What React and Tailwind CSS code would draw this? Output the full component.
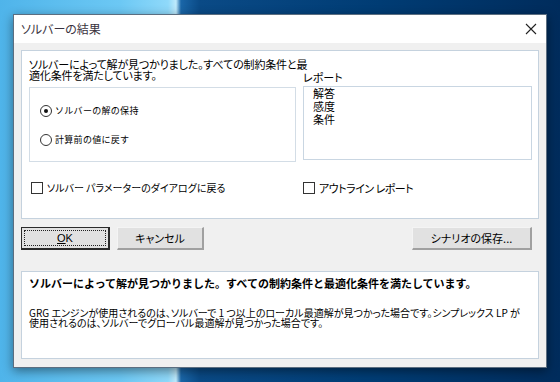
import React from "react";

const jp = "font-['Noto_Sans_CJK_JP','Noto_Sans',sans-serif]";

function Radio({ checked, label }) {
  return (
    <div className="flex items-center h-[14px]">
      <span className="w-[12px] h-[12px] rounded-full border border-[#333] bg-white flex items-center justify-center">
        {checked && <span className="w-[4px] h-[4px] rounded-full bg-[#111]" />}
      </span>
      <span className="ml-[3px] text-[9px] leading-[12px] tracking-[0.3px] text-black">{label}</span>
    </div>
  );
}

function Check({ label, textClass }) {
  return (
    <div className="flex items-center h-[14px]">
      <span className="w-[12px] h-[12px] border border-[#333] bg-white" />
      <span className={`ml-[4px] leading-[12px] text-black [font-feature-settings:'palt'] ${textClass}`}>{label}</span>
    </div>
  );
}

export default function App() {
  return (
    <div className={`relative w-[560px] h-[382px] overflow-hidden ${jp} bg-[linear-gradient(90deg,#4fb4ea_0px,#6cc8f4_120px,#8fd9fa_168px,#bfeafc_176px,#1a66a8_181px,#0a4a86_200px,#003c74_380px,#002c5c_560px)]`}>
      <div className="absolute left-[13px] top-[14px] w-[534px] h-[354px] border border-[#5c6e80] bg-[#f0f0f0] flex flex-col shadow-[0_3px_10px_rgba(0,0,0,0.45)]">
        {/* title bar */}
        <div className="h-[28px] bg-white flex items-center justify-between pl-[7px] pr-[8px] shrink-0">
          <span className="text-[12px] leading-[14px] text-[#3a3340] [font-feature-settings:'palt']">ソルバーの結果</span>
          <svg width="12" height="12" viewBox="0 0 12 12" className="mr-[1px]">
            <path d="M1 1 L11 11 M11 1 L1 11" stroke="#222" strokeWidth="1.1" />
          </svg>
        </div>
        {/* body */}
        <div className="flex-1 flex flex-col px-[7px] pt-[7px] pb-[8px]">
          {/* upper panel */}
          <div className="h-[169px] bg-white border border-[#c5d2de] flex flex-col pl-[7px] shrink-0">
            <div className="flex">
              <div className="w-[267px] flex flex-col">
                <p className="w-[280px] mt-[8px] text-[11px] leading-[11px] text-black [font-feature-settings:'palt'] tracking-[-0.15px]">
                  ソルバーによって解が見つかりました。すべての制約条件と最適化条件を満たしています。
                </p>
                <div className="mt-[6px] h-[75px] border border-[#d3dde6] flex flex-col pl-[10px] pt-[16px] gap-[15px]">
                  <Radio checked label="ソルバーの解の保持" />
                  <Radio label="計算前の値に戻す" />
                </div>
              </div>
              <div className="ml-[7px] w-[229px] flex flex-col">
                <span className="mt-[20px] text-[11px] leading-[12px] text-black [font-feature-settings:'palt']">レポート</span>
                <div className="mt-[3px] h-[74px] border border-[#c9d6e2] pl-[9px] flex flex-col">
                  <span className="text-[11px] leading-[13px] text-black">解答</span>
                  <span className="text-[11px] leading-[13px] text-black">感度</span>
                  <span className="text-[11px] leading-[13px] text-black">条件</span>
                </div>
              </div>
            </div>
            <div className="flex mt-[19px]">
              <div className="w-[274px] pl-[2px]">
                <Check label="ソルバー パラメーターのダイアログに戻る" textClass="text-[10px] tracking-[0px]" />
              </div>
              <div>
                <Check label="アウトライン レポート" textClass="text-[11px] tracking-[-0.5px]" />
              </div>
            </div>
          </div>
          {/* buttons */}
          <div className="mt-[8px] h-[23px] flex items-stretch pr-[7px] shrink-0">
            <button className="relative w-[89px] bg-[#e1e1e1] border border-[#2a2a2a] border-r-2 border-b-2 text-[11px] text-black font-['Liberation_Sans',sans-serif] flex items-center justify-center">
              <span className="absolute inset-[2px] border border-dotted border-[#222]" />
              <span><span className="underline">O</span>K</span>
            </button>
            <button className="ml-[7px] w-[87px] bg-[#e1e1e1] border border-[#f4f4f4] border-r-[#a0a0a0] border-b-[#a0a0a0] border-r-2 border-b-2 text-[11px] text-black flex items-center justify-center [font-feature-settings:'palt']">
              キャンセル
            </button>
            <div className="flex-1" />
            <button className="w-[120px] bg-[#e1e1e1] border border-[#f4f4f4] border-r-[#a0a0a0] border-b-[#a0a0a0] border-r-2 border-b-2 text-[11px] text-black flex items-center justify-center [font-feature-settings:'palt']">
              シナリオの保存...
            </button>
          </div>
          {/* lower panel */}
          <div className="mt-[21px] flex-1 bg-white border border-[#c5d2de] pl-[7px] pt-[5px]">
            <p className="text-[11px] leading-[13px] font-bold text-black tracking-[0px]">
              ソルバーによって解が見つかりました。すべての制約条件と最適化条件を満たしています。
            </p>
            <p className="mt-[18px] w-[496px] text-[10px] leading-[10px] text-black [font-feature-settings:'palt'] tracking-[0px]">
              GRG エンジンが使用されるのは、ソルバーで 1 つ以上のローカル最適解が見つかった場合です。シンプレックス LP が使用されるのは、ソルバーでグローバル最適解が見つかった場合です。
            </p>
          </div>
        </div>
      </div>
    </div>
  );
}
